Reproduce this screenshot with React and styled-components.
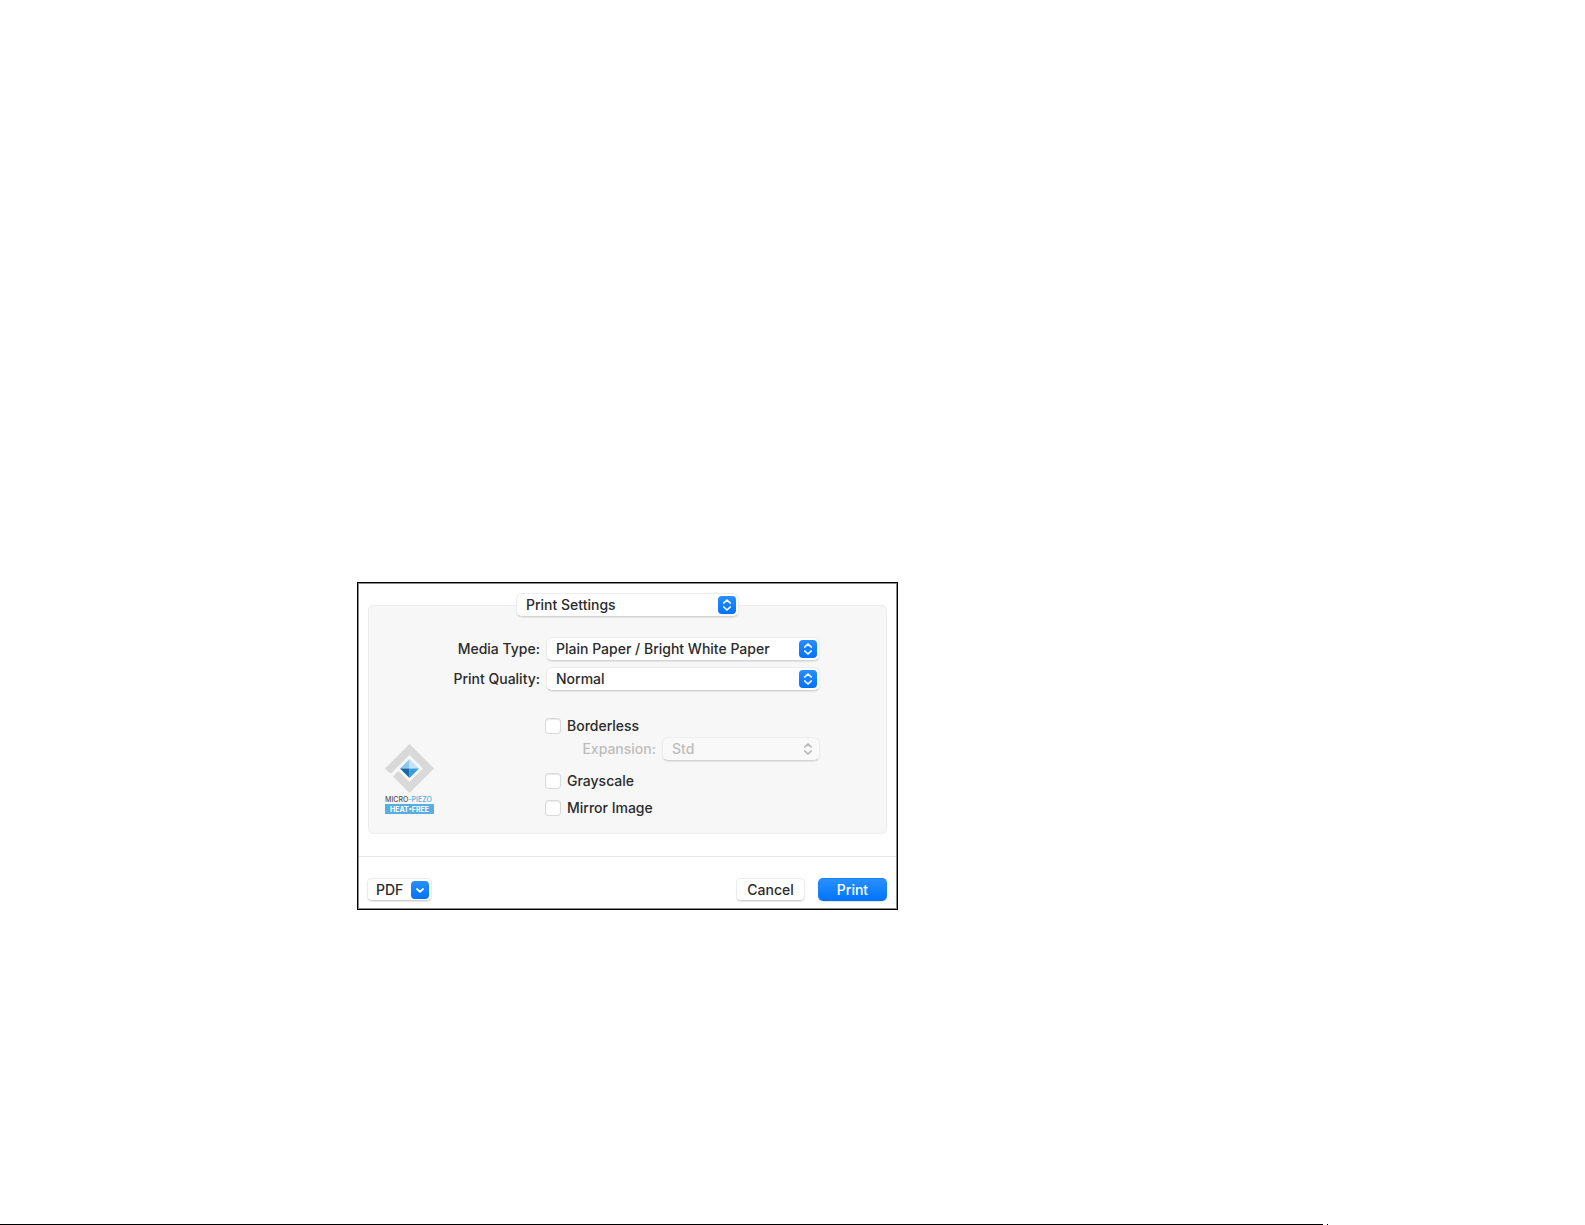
import React, { useState } from "react";
import styled, { createGlobalStyle } from "styled-components";

const GlobalStyle = createGlobalStyle`
  * {
    box-sizing: border-box;
  }
  body {
    margin: 0;
    background: #fff;
    color: #2b2b2b;
    font-family: Inter, "Liberation Sans", sans-serif;
    font-size: 14px;
    font-weight: 450;
    line-height: 20px;
  }
`;

const Page = styled.main`
  display: flex;
  flex-direction: column;
  min-height: 100vh;
  padding-top: 582px;
`;

const Dialog = styled.form`
  width: 100%;
  max-width: 541px;
  margin-left: 357px;
  border: 1px solid #000;
  box-shadow: inset 0 0 0 1px #8a8a8a;
`;

const Panel = styled.section`
  display: flex;
  flex-direction: column;
  margin: 22px 10px 22px;
  padding-bottom: 15px;
  background: #f7f7f7;
  border: 1px solid #ececec;
  border-radius: 5px;
`;

const PanelHeader = styled.div`
  width: 223px;
  margin: -13px auto 0;
`;

const PanelBody = styled.div`
  display: flex;
  align-items: flex-end;
  margin-top: 20px;
  padding: 0 66px 0 16px;
`;

const Fields = styled.div`
  display: grid;
  flex: 1;
  grid-template-columns: 1fr 274px;
  column-gap: 6px;
  row-gap: 6px;
  align-items: center;
`;

const FieldLabel = styled.label`
  text-align: right;
  white-space: nowrap;
  color: ${({ disabled }) => (disabled ? "#bdbdbd" : "inherit")};
`;

const Options = styled.div`
  display: flex;
  flex-direction: column;
  grid-column: 2;
  margin-top: 19px;
`;

const CheckLabel = styled.label`
  display: flex;
  align-items: center;
  gap: 7px;
  height: 20px;
  margin-top: ${({ gap }) => gap || 0}px;
`;

const Checkbox = styled.input.attrs({ type: "checkbox" })`
  appearance: none;
  width: 14px;
  height: 14px;
  margin: 0;
  background: #fff;
  border-radius: 3px;
  box-shadow: 0 0 0 1px #d9d9d9, inset 0 1px 1px #e8e8e8;

  &:checked {
    background: #0a7aff;
  }
`;

const ExpansionRow = styled.div`
  display: flex;
  align-items: center;
  justify-content: flex-end;
  gap: 6px;
  margin-top: 1px;
`;

const SelectWrap = styled.div`
  position: relative;
  width: ${({ width }) => width || "100%"};
`;

const StyledSelect = styled.select`
  appearance: none;
  display: block;
  width: 100%;
  height: 24px;
  margin: 0;
  padding: 0 24px 1px 9px;
  font: inherit;
  line-height: 20px;
  color: #2b2b2b;
  background: #fff;
  border: 1px solid #ededed;
  border-bottom-color: #d4d4d4;
  border-radius: 6px;
  box-shadow: 0 1px 1px rgba(0, 0, 0, 0.08);

  &:disabled {
    color: #bdbdbd;
    background: #f9f9f9;
    opacity: 1;
  }
`;

const Badge = styled.span`
  display: flex;
  align-items: center;
  justify-content: center;
  width: 18px;
  height: 18px;
  border-radius: 4px;
  color: ${({ plain }) => (plain ? "#b4b4b4" : "#fff")};
  background: ${({ plain }) =>
    plain ? "none" : "linear-gradient(#2a8fff, #0072fb)"};
`;

const SelectBadge = styled(Badge)`
  position: absolute;
  top: 3px;
  right: 3px;
  pointer-events: none;
`;

const Footer = styled.footer`
  display: flex;
  gap: 13px;
  margin: 0 1px;
  padding: 21px 9px 8px 8px;
  border-top: 1px solid #e8e8e8;
`;

const Button = styled.button`
  display: flex;
  align-items: center;
  justify-content: center;
  width: 69px;
  height: 23px;
  padding: 0;
  font: inherit;
  line-height: 20px;
  color: ${({ primary }) => (primary ? "#fff" : "#2b2b2b")};
  background: ${({ primary }) =>
    primary ? "linear-gradient(#2a8fff, #0075fd)" : "#fff"};
  border: 1px solid ${({ primary }) => (primary ? "#1681fa" : "#ebebeb")};
  border-bottom-color: ${({ primary }) => (primary ? "#0070f2" : "#d0d0d0")};
  border-radius: 5px;
  box-shadow: 0 1px 1px rgba(0, 0, 0, 0.1);
`;

const PdfButton = styled(Button)`
  justify-content: space-between;
  width: 65px;
  margin-right: auto;
  padding: 0 2px 0 8px;
`;

const Logo = styled.svg`
  flex: none;
  width: 49px;
  height: 74px;
`;

const PageEnd = styled.div`
  display: flex;
  gap: 4px;
  margin-top: auto;
`;

const PageRule = styled.hr`
  width: ${({ width }) => width};
  height: 1px;
  margin: 0;
  border: 0;
  background: #000;
`;

function UpDown() {
  return (
    <svg width="10" height="14" viewBox="0 0 10 14" fill="none" aria-hidden="true">
      <path
        d="M1.8 5 5 2l3.2 3M1.8 9 5 12l3.2-3"
        stroke="currentColor"
        strokeWidth="1.7"
        strokeLinecap="round"
        strokeLinejoin="round"
      />
    </svg>
  );
}

function Down() {
  return (
    <svg width="10" height="8" viewBox="0 0 10 8" fill="none" aria-hidden="true">
      <path
        d="M2 3l3 2.8L8 3"
        stroke="currentColor"
        strokeWidth="1.8"
        strokeLinecap="round"
        strokeLinejoin="round"
      />
    </svg>
  );
}

function Select({ options, width, disabled, ...rest }) {
  return (
    <SelectWrap width={width}>
      <StyledSelect disabled={disabled} {...rest}>
        {options.map((option) => (
          <option key={option}>{option}</option>
        ))}
      </StyledSelect>
      <SelectBadge plain={disabled}>
        <UpDown />
      </SelectBadge>
    </SelectWrap>
  );
}

function MicroPiezoLogo() {
  return (
    <Logo viewBox="0 0 49 74" role="img" aria-label="Micro Piezo Heat-Free">
      <path
        d="M4.5 29 0 24.5 24.5 0 49 24.5 24.5 49 8 32.5l5.5-5.5 11 11L38 24.5 24.5 11 6.5 29z"
        fill="#d9d9d9"
      />
      <path d="M24.5 15v9.5H15z" fill="#8cc8ee" />
      <path d="M24.5 15v9.5H34z" fill="#c3e2f6" />
      <path d="M15 24.5h9.5V34z" fill="#1767a8" />
      <path d="M34 24.5h-9.5V34z" fill="#3a9ddb" />
      <text x="0" y="58" fontSize="7" fill="#555">
        MICRO
        <tspan fill="#52aee0">-PIEZO</tspan>
      </text>
      <rect y="60" width="49" height="10" fill="#5aade0" />
      <text
        x="24.5"
        y="68"
        fontSize="7"
        fontWeight="700"
        fill="#fff"
        textAnchor="middle"
      >
        HEAT•FREE
      </text>
    </Logo>
  );
}

function App() {
  const [borderless, setBorderless] = useState(false);

  return (
    <>
      <GlobalStyle />
      <Page>
        <Dialog onSubmit={(e) => e.preventDefault()}>
          <Panel>
            <PanelHeader>
              <Select
                aria-label="Settings section"
                options={["Print Settings", "Layout", "Color Matching"]}
              />
            </PanelHeader>
            <PanelBody>
              <MicroPiezoLogo />
              <Fields>
                <FieldLabel htmlFor="media">Media Type:</FieldLabel>
                <Select
                  id="media"
                  options={["Plain Paper / Bright White Paper", "Envelope"]}
                />
                <FieldLabel htmlFor="quality">Print Quality:</FieldLabel>
                <Select id="quality" options={["Normal", "Draft", "Fine"]} />
                <Options>
                  <CheckLabel>
                    <Checkbox
                      checked={borderless}
                      onChange={(e) => setBorderless(e.target.checked)}
                    />
                    Borderless
                  </CheckLabel>
                  <ExpansionRow>
                    <FieldLabel htmlFor="expansion" disabled={!borderless}>
                      Expansion:
                    </FieldLabel>
                    <Select
                      id="expansion"
                      width="158px"
                      disabled={!borderless}
                      options={["Std", "Mid", "Min"]}
                    />
                  </ExpansionRow>
                  <CheckLabel gap={10}>
                    <Checkbox />
                    Grayscale
                  </CheckLabel>
                  <CheckLabel gap={7}>
                    <Checkbox />
                    Mirror Image
                  </CheckLabel>
                </Options>
              </Fields>
            </PanelBody>
          </Panel>
          <Footer>
            <PdfButton type="button">
              PDF
              <Badge>
                <Down />
              </Badge>
            </PdfButton>
            <Button type="button">Cancel</Button>
            <Button type="submit" primary>
              Print
            </Button>
          </Footer>
        </Dialog>
        <PageEnd>
          <PageRule width="83.5%" />
          <PageRule width="1px" />
        </PageEnd>
      </Page>
    </>
  );
}

export default App;
